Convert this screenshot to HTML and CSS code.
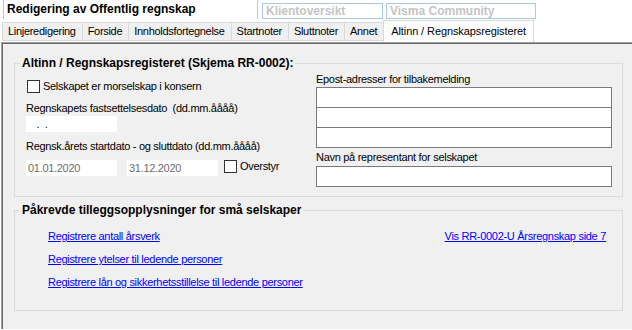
FILE: index.html
```html
<!DOCTYPE html>
<html lang="no">
<head>
    <meta charset="UTF-8">
    <meta name="viewport" content="width=device-width, initial-scale=1.0">
    <title>Redigering av Offentlig regnskap</title>
    <link rel="stylesheet" href="styles.css">
</head>
<body>
    <div class="doc-tabs">
        <div class="doc-tab active">Redigering av Offentlig regnskap</div>
        <div class="doc-tab clients">Klientoversikt</div>
        <div class="doc-tab community">Visma Community</div>
    </div>

    <div class="page-tabs">
        <div class="page-tab">Linjeredigering</div>
        <div class="page-tab">Forside</div>
        <div class="page-tab">Innholdsfortegnelse</div>
        <div class="page-tab">Startnoter</div>
        <div class="page-tab">Sluttnoter</div>
        <div class="page-tab">Annet</div>
        <div class="page-tab active">Altinn / Regnskapsregisteret</div>
    </div>

    <div class="panel">
        <div class="panel-inner">
            <fieldset class="group">
                <legend>Altinn / Regnskapsregisteret (Skjema RR-0002):</legend>
                <div class="group-grid">
                    <div class="col-left">
                        <label class="check-row first">
                            <span class="check"></span>
                            <span>Selskapet er morselskap i konsern</span>
                        </label>
                        <div class="field-label date-label">Regnskapets fastsettelsesdato&nbsp; (dd.mm.åååå)</div>
                        <div class="date-input blank">  .  .</div>
                        <div class="field-label period-label">Regnsk.årets startdato - og sluttdato (dd.mm.åååå)</div>
                        <div class="date-row">
                            <div class="date-input muted">01.01.2020</div>
                            <div class="date-input muted">31.12.2020</div>
                            <label class="check-row">
                                <span class="check"></span>
                                <span>Overstyr</span>
                            </label>
                        </div>
                    </div>
                    <div class="col-right">
                        <div class="field-label">Epost-adresser for tilbakemelding</div>
                        <div class="list-box">
                            <div class="list-row"></div>
                            <div class="list-row"></div>
                            <div class="list-row"></div>
                        </div>
                        <div class="field-label">Navn på representant for selskapet</div>
                        <div class="text-box"></div>
                    </div>
                </div>
            </fieldset>

            <fieldset class="group links-group">
                <legend>Påkrevde tilleggsopplysninger for små selskaper</legend>
                <div class="links-row">
                    <div class="link-list">
                        <a href="#">Registrere antall årsverk</a>
                        <a href="#">Registrere ytelser til ledende personer</a>
                        <a href="#">Registrere lån og sikkerhetsstillelse til ledende personer</a>
                    </div>
                    <a href="#" class="side-link">Vis RR-0002-U Årsregnskap side 7</a>
                </div>
            </fieldset>
        </div>
    </div>
</body>
</html>
```

FILE: styles.css
```css
:root {
    --panel-bg: #f0f0f0;
    --tab-border: #d9d9d9;
    --group-border: #dcdcdc;
    --input-border: #7a7a7a;
    --doc-tab-border: #a9c8ec;
    --link-color: #0000ff;
}

body {
    margin: 0;
    background: #fff;
    font-family: 'Liberation Sans', Arial, sans-serif;
    font-size: 11px;
    letter-spacing: -0.3px;
    color: #000;
}

/* document tabs on top */
.doc-tabs {
    display: flex;
    align-items: flex-start;
    height: 19px;
    padding-left: 3px;
}

.doc-tab {
    box-sizing: border-box;
    font-size: 12px;
    font-weight: bold;
    letter-spacing: 0;
    border: 1px solid var(--doc-tab-border);
    padding-left: 3px;
}

.doc-tab.active {
    width: 255px;
    height: 19px;
    border-top: none;
    border-bottom: none;
    line-height: 18px;
}

.doc-tab.clients,
.doc-tab.community {
    margin-top: 3px;
    height: 16px;
    line-height: 14px;
    color: #c4c4c4;
}

.doc-tab.clients {
    width: 121px;
    margin-left: 4px;
}

.doc-tab.community {
    width: 150px;
    margin-left: 3px;
}

/* page tabs */
.page-tabs {
    display: flex;
    align-items: flex-start;
    height: 23px;
    padding-left: 3px;
}

.page-tab {
    box-sizing: border-box;
    height: 19px;
    margin-top: 3px;
    margin-left: -1px;
    padding: 0 6px 0 5px;
    line-height: 17px;
    background: var(--panel-bg);
    border: 1px solid var(--tab-border);
    white-space: nowrap;
}

.page-tab.active {
    height: 22px;
    margin-top: 1px;
    padding: 0 7px;
    line-height: 21px;
    letter-spacing: -0.1px;
    background: #fff;
    border-bottom: none;
}

/* sunken content panel */
.panel {
    margin: 0 0 0 1px;
    border-top: 1px solid #a0a0a0;
    border-left: 1px solid #a0a0a0;
}

.panel-inner {
    background: var(--panel-bg);
    border-top: 1px solid #696969;
    border-left: 1px solid #696969;
    padding: 12px 9px 18px 11px;
}

.group {
    margin: 0;
    padding: 0 10px 9px 5px;
    border: 1px solid var(--group-border);
    min-width: 0;
}

.group legend {
    padding: 0 2px;
    font-size: 12px;
    font-weight: bold;
    letter-spacing: 0;
    line-height: 14px;
}

.group-grid {
    display: grid;
    grid-template-columns: 1fr 296px;
    padding-left: 6px;
}

.field-label {
    line-height: 13px;
    white-space: nowrap;
}

.check-row {
    display: flex;
    align-items: center;
    gap: 3px;
    line-height: 13px;
}

.check-row.first {
    margin: 10px 0 0 1px;
}

.check {
    box-sizing: border-box;
    width: 13px;
    height: 13px;
    border: 1px solid #333;
    background: #fff;
}

.date-label {
    margin-top: 9px;
}

.period-label {
    margin-top: 8px;
}

.date-input {
    box-sizing: border-box;
    width: 91px;
    height: 16px;
    padding-left: 2px;
    line-height: 16px;
    background: #fff;
    white-space: pre;
}

.date-input.blank {
    margin-top: 1px;
    padding-left: 5px;
}

.date-input.muted {
    color: #6d6d6d;
}

.date-row {
    display: flex;
    align-items: flex-start;
    gap: 10px;
    margin-top: 7px;
}

.date-row .check-row {
    margin-left: -4px;
}

.col-right .field-label {
    margin-top: 3px;
}

.list-box {
    margin-top: 1px;
}

.list-row,
.text-box {
    box-sizing: border-box;
    height: 21px;
    background: #fff;
    border: 1px solid var(--input-border);
}

.list-row + .list-row {
    margin-top: -1px;
}

.text-box {
    margin-top: 2px;
}

/* links group */
.links-group {
    margin-top: 6px;
    padding-bottom: 21px;
}

.links-row {
    display: flex;
    justify-content: space-between;
    align-items: flex-start;
    padding: 13px 6px 0 28px;
}

.link-list {
    display: flex;
    flex-direction: column;
    gap: 10px;
}

.links-row a {
    color: var(--link-color);
    line-height: 13px;
    text-decoration: underline;
}
```
